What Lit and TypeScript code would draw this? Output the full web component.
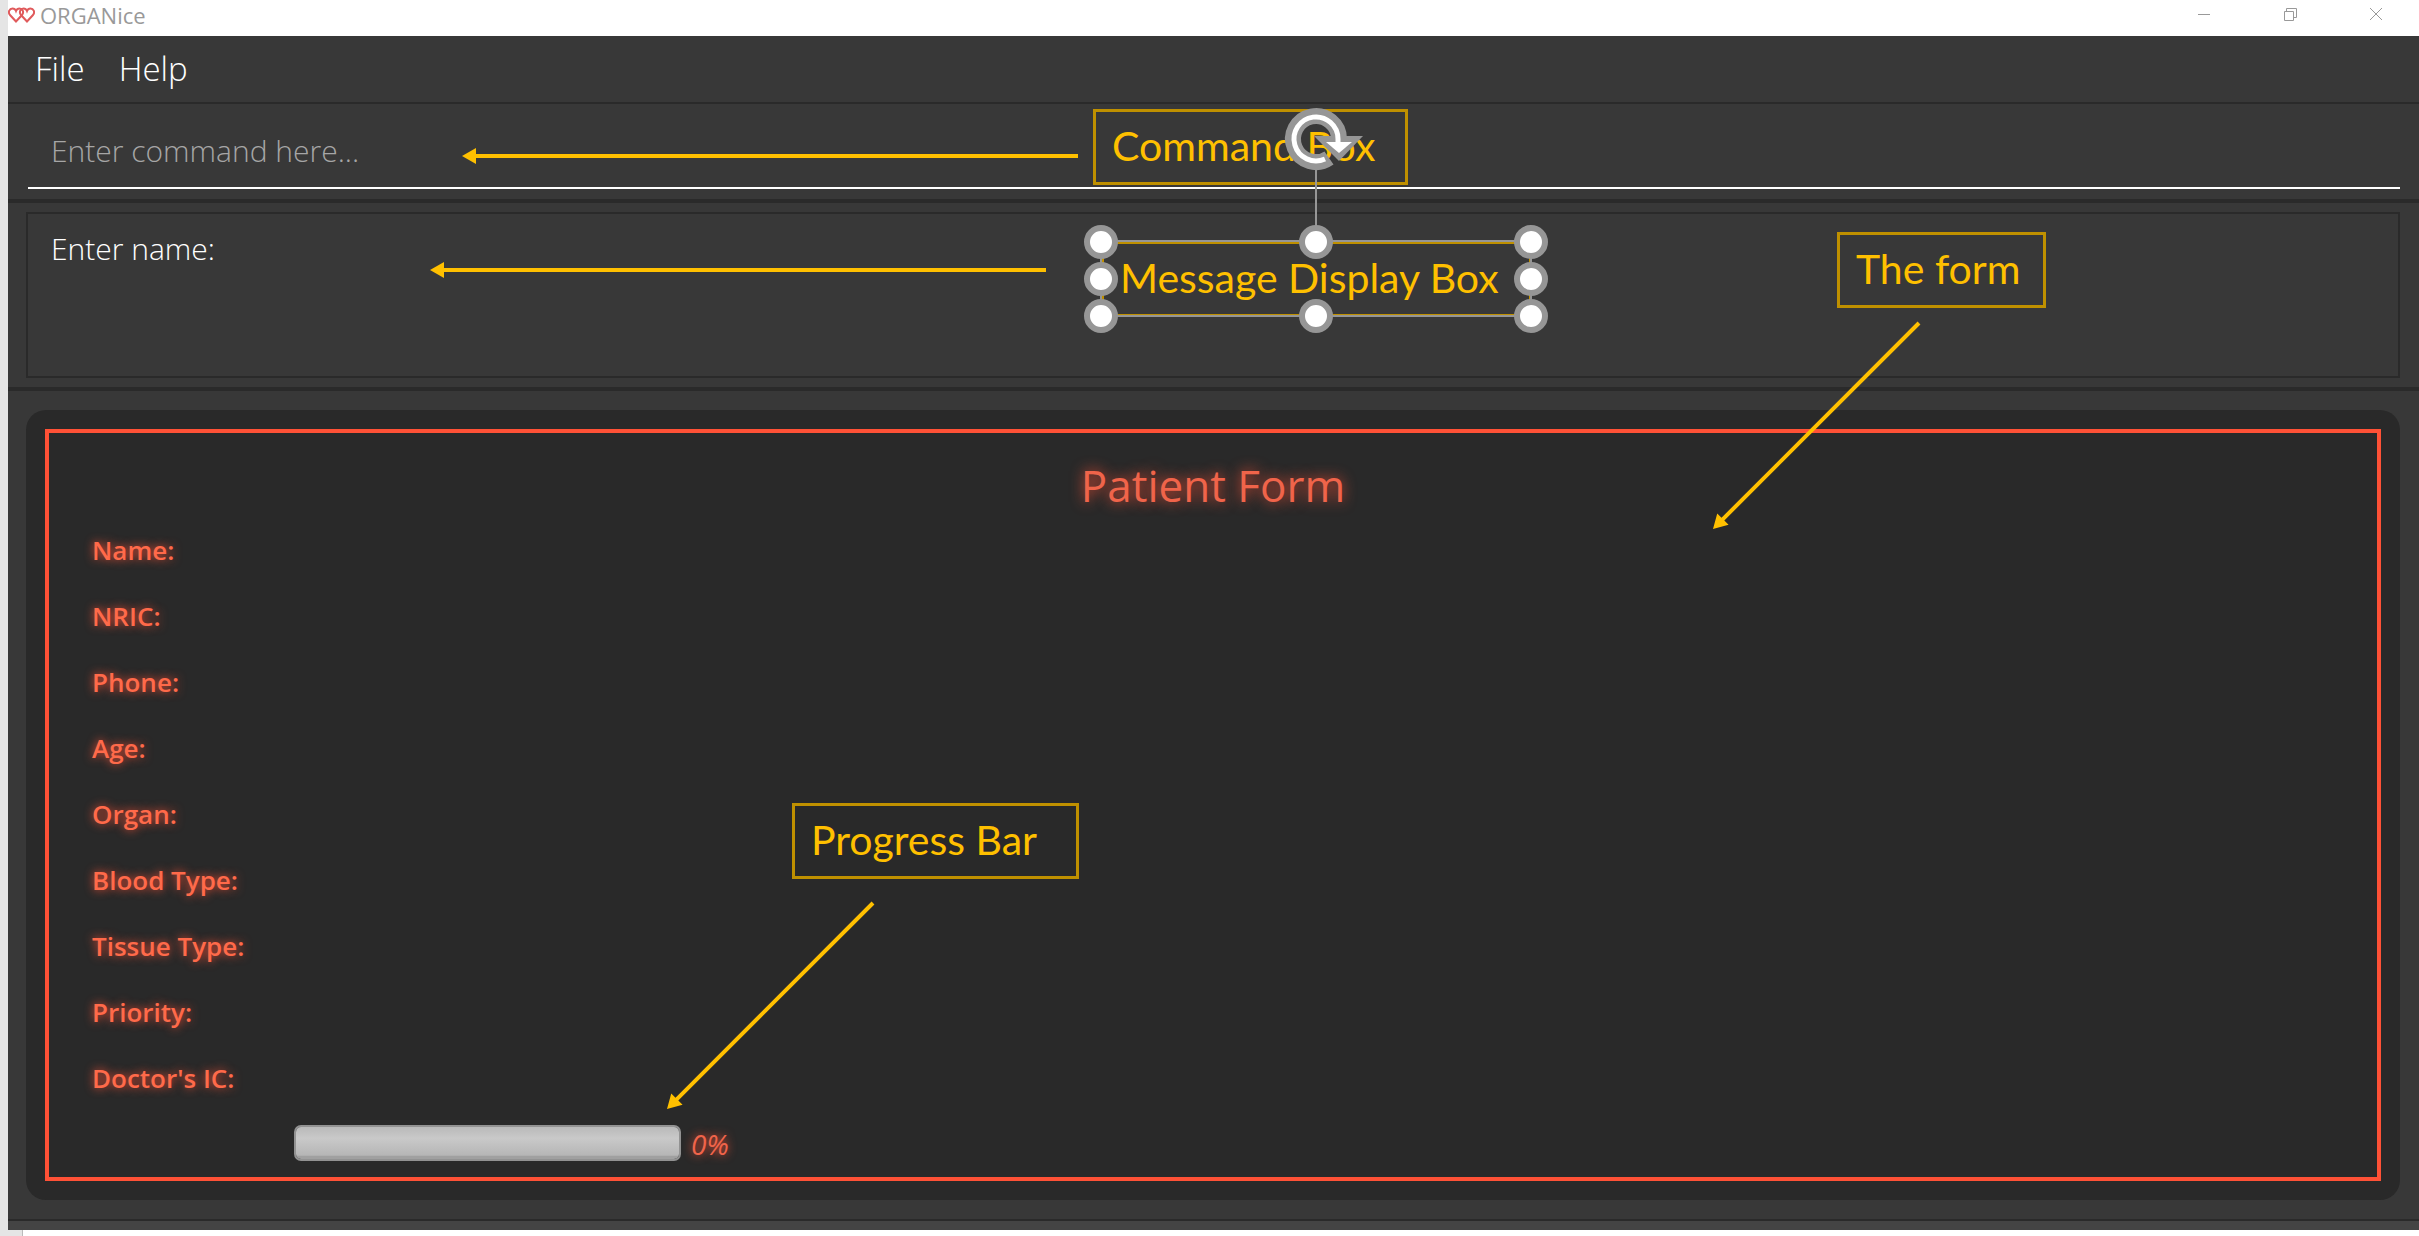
import { LitElement, html, css, svg } from "lit";
import { customElement } from "lit/decorators.js";

const FIELDS = ["Name", "NRIC", "Phone", "Age", "Organ", "Blood Type", "Tissue Type", "Priority", "Doctor's IC"];

/** Arrows of the annotation layer, tail first. */
const ARROWS = [
  { x1: 1078, y1: 156, x2: 462, y2: 156 },
  { x1: 1046, y1: 270, x2: 430, y2: 270 },
  { x1: 1919, y1: 323, x2: 1713, y2: 529 },
  { x1: 873, y1: 903, x2: 667, y2: 1109 },
];

/** Resize handles of the selected callout. */
const HANDLES = [
  [1101, 242], [1316, 242], [1531, 242],
  [1101, 279], [1531, 279],
  [1101, 316], [1316, 316], [1531, 316],
];

@customElement("title-bar")
class TitleBar extends LitElement {
  static styles = css`
    :host {
      display: flex;
      align-items: flex-start;
      justify-content: space-between;
      height: 36px;
      background: #fff;
      color: #999;
    }
    .brand {
      display: flex;
      align-items: center;
      gap: 5px;
      height: 30px;
      font: 400 22px/30px "Open Sans", "Noto Sans", sans-serif;
    }
    .controls {
      display: flex;
      height: 28px;
    }
    .control {
      display: grid;
      place-items: center;
      width: 86px;
      padding: 0;
      border: 0;
      background: none;
      color: #999;
    }
    .control svg {
      fill: none;
      stroke: currentColor;
    }
  `;
  render() {
    return html`
      <div class="brand">
        <svg width="27" height="16" viewBox="0 0 27 16" fill="none" stroke="#e05a5c" stroke-width="2">
          <path d="M8 14.5 2 8C-.4 5 1.6 1.5 4.500 1.500 6.500 1.500 7.500 2.700 8 4 8.500 2.700 9.500 1.500 11.500 1.500 14.400 1.500 16.400 5 14 8Z" />
          <path d="M19 14.500 13 8C10.600 5 12.600 1.500 15.500 1.500 17.500 1.500 18.500 2.700 19 4 19.500 2.700 20.500 1.500 22.500 1.500 25.400 1.500 27.400 5 25 8Z" />
        </svg>
        <span>ORGANice</span>
      </div>
      <div class="controls">
        <button class="control" aria-label="Minimize">
          <svg width="14" height="14"><path d="M1 7.500H13" /></svg>
        </button>
        <button class="control" aria-label="Restore">
          <svg width="14" height="14"><path d="M1.500 4.500H10.500V13.500H1.500ZM3.500 4V1.500H13.500V10.500H11" /></svg>
        </button>
        <button class="control" aria-label="Close">
          <svg width="14" height="14"><path d="M1 1 13 13M13 1 1 13" /></svg>
        </button>
      </div>
    `;
  }
}

@customElement("patient-form")
class PatientForm extends LitElement {
  static styles = css`
    :host {
      display: flex;
      flex: 1;
      padding: 19px;
      border-radius: 20px;
      background: #292929;
      color: #ff6a4a;
      font-family: "Open Sans", "Noto Sans", sans-serif;
    }
    .frame {
      flex: 1;
      padding: 22px 42px 16px;
      border: 4px solid #ff5136;
    }
    .heading {
      margin: 0 0 16px;
      color: #f0644a;
      font-size: 44px;
      font-weight: 400;
      line-height: 60px;
      text-align: center;
      text-shadow: 0 0 14px #ff5136;
    }
    .row {
      display: flex;
      align-items: center;
      gap: 20px;
      height: 36px;
      margin-bottom: 30px;
    }
    .label {
      padding: 2px 8px 0 1px;
      font-size: 26px;
      font-weight: 600;
      line-height: 36px;
      text-shadow: 0 0 10px #ff5136;
    }
    .field {
      flex: 1;
      border: 0;
      outline: 0;
      background: none;
      color: inherit;
      font: inherit;
    }
    .status {
      display: flex;
      align-items: center;
      gap: 10px;
      height: 36px;
      padding-left: 203px;
    }
    .bar {
      appearance: none;
      box-sizing: border-box;
      width: 387px;
      height: 36px;
      overflow: hidden;
      border: 2px solid #929292;
      border-radius: 7px;
    }
    .bar::-webkit-progress-bar {
      background: linear-gradient(#b9b9b9, #c9c9c9 35%, #b6b6b6 88%, #a0a0a0 92%);
    }
    .bar::-webkit-progress-value {
      background: #ff5136;
    }
    .percent {
      padding-top: 2px;
      color: #f0644a;
      font-size: 28px;
      font-style: italic;
      line-height: 36px;
      text-shadow: 0 0 10px #ff5136;
    }
  `;
  render() {
    return html`
      <form class="frame">
        <h1 class="heading">Patient Form</h1>
        ${FIELDS.map(
          (name, i) => html`
            <div class="row">
              <label class="label" for="field-${i}">${name}:</label>
              <input class="field" id="field-${i}" />
            </div>
          `
        )}
        <div class="status">
          <progress class="bar" id="progress" max="100" value="0"></progress>
          <label class="percent" for="progress">0%</label>
        </div>
      </form>
    `;
  }
}

@customElement("annotation-layer")
class AnnotationLayer extends LitElement {
  static styles = css`
    :host {
      position: absolute;
      inset: 0;
      overflow: hidden;
      pointer-events: none;
    }
    .canvas {
      position: absolute;
      inset: 0;
      width: 100%;
      height: 100%;
    }
    .callout {
      position: absolute;
      box-sizing: border-box;
      height: 76px;
      padding: 0 16px;
      border: 3px solid #bf9000;
      color: #ffc000;
      font: 41px/68px Lato, "Open Sans", sans-serif;
      white-space: nowrap;
    }
    .command { left: 1093px; top: 109px; width: 315px; }
    .message { left: 1101px; top: 241px; width: 431px; }
    .form { left: 1837px; top: 232px; width: 209px; }
    .progress { left: 792px; top: 803px; width: 287px; }
  `;
  render() {
    return html`
      <div class="callout command">Command Box</div>
      <div class="callout message">Message Display Box</div>
      <div class="callout form">The form</div>
      <div class="callout progress">Progress Bar</div>
      <svg class="canvas">
        ${ARROWS.map((a) => {
          const length = Math.hypot(a.x2 - a.x1, a.y2 - a.y1);
          const angle = (Math.atan2(a.y2 - a.y1, a.x2 - a.x1) * 180) / Math.PI;
          return svg`<g transform="translate(${a.x1} ${a.y1}) rotate(${angle})" fill="#ffc000">
            <path d="M0 -2H${length - 14}V-8L${length} 0L${length - 14} 8V2H0Z" />
          </g>`;
        })}
        <g fill="none" stroke="#969696" stroke-width="2">
          <path d="M1316 170V226" />
          <path d="M1101 241H1531V316H1101Z" />
        </g>
        <g fill="#fff" stroke="#969696" stroke-width="6">
          ${HANDLES.map(([x, y]) => svg`<circle cx=${x} cy=${y} r="14" />`)}
        </g>
        <g transform="translate(1316 139)">
          <path d="M23 0A23 23 0 1 0 13 19" fill="none" stroke="#969696" stroke-width="16" />
          <path d="M-2 -3H47L23 22Z" fill="#969696" />
          <path d="M22 5V0A22 22 0 1 0 9 20" fill="none" stroke="#fff" stroke-width="5" />
          <path d="M10 3H36L23 14Z" fill="#fff" />
        </g>
      </svg>
    `;
  }
}

@customElement("app-root")
class AppRoot extends LitElement {
  static styles = css`
    :host {
      position: relative;
      display: flex;
      flex-direction: column;
      box-sizing: border-box;
      min-height: 100vh;
      background: #e5e5e5;
      font-family: "Open Sans", "Noto Sans", sans-serif;
    }
    .window {
      display: flex;
      flex: 1;
      flex-direction: column;
      margin-left: 8px;
      background: #383838;
    }
    .menu {
      display: flex;
      gap: 34px;
      height: 66px;
      padding: 0 27px;
      border-bottom: 2px solid #2a2a2a;
    }
    .item {
      padding: 0;
      border: 0;
      background: none;
      color: #fff;
      font: 300 33px/64px "Open Sans", "Noto Sans", sans-serif;
    }
    .command {
      display: flex;
      padding: 8px 19px 10px 20px;
      border-bottom: 4px solid #2a2a2a;
    }
    .input {
      flex: 1;
      height: 77px;
      box-sizing: border-box;
      padding: 2px 23px 0;
      border: 0;
      border-bottom: 2px solid #fff;
      outline: 0;
      background: none;
      color: #fff;
      font: 300 30px/40px "Open Sans", "Noto Sans", sans-serif;
    }
    .input::placeholder {
      color: #a6a6a6;
      opacity: 1;
    }
    .display {
      padding: 9px 19px 9px 18px;
      border-bottom: 4px solid #2a2a2a;
    }
    .message {
      box-sizing: border-box;
      min-height: 166px;
      margin: 0;
      padding: 15px 23px;
      border: 2px solid #2a2a2a;
      color: #fff;
      font-size: 30px;
      font-weight: 300;
      line-height: 40px;
    }
    .content {
      display: flex;
      flex: 1;
      padding: 19px 19px 19px 18px;
    }
    .status {
      height: 9px;
      border-top: 2px solid #2a2a2a;
      background: #444;
    }
    .below {
      height: 6px;
      margin-left: 22px;
      border-left: 1px solid #bbb;
      background: #fff;
    }
  `;
  render() {
    return html`
      <div class="window">
        <title-bar></title-bar>
        <nav class="menu">
          <button class="item">File</button>
          <button class="item">Help</button>
        </nav>
        <div class="command">
          <input class="input" aria-label="Command" placeholder="Enter command here..." />
        </div>
        <div class="display"><p class="message">Enter name:</p></div>
        <main class="content"><patient-form></patient-form></main>
        <div class="status"></div>
      </div>
      <div class="below"></div>
      <annotation-layer></annotation-layer>
    `;
  }
}
